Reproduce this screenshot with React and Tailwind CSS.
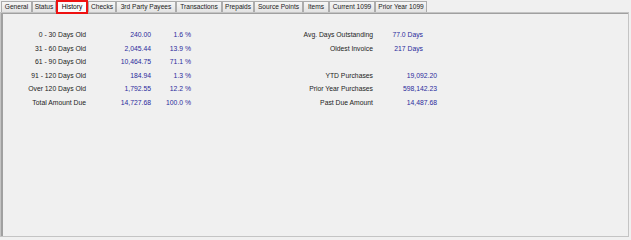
import React from "react";

const tabs = [
  ["General", 31],
  ["Status", 24],
  ["History", 32],
  ["Checks", 28],
  ["3rd Party Payees", 60],
  ["Transactions", 46],
  ["Prepaids", 32],
  ["Source Points", 49],
  ["Items", 26],
  ["Current 1099", 46],
  ["Prior Year 1099", 52],
];

const left = [
  ["0 - 30 Days Old", "240.00", "1.6 %"],
  ["31 - 60 Days Old", "2,045.44", "13.9 %"],
  ["61 - 90 Days Old", "10,464.75", "71.1 %"],
  ["91 - 120 Days Old", "184.94", "1.3 %"],
  ["Over 120 Days Old", "1,792.55", "12.2 %"],
  ["Total Amount Due", "14,727.68", "100.0 %"],
];

const right = [
  ["Avg. Days Outstanding", "77.0 Days", true],
  ["Oldest Invoice", "217 Days", true],
  ["", "", false],
  ["YTD Purchases", "19,092.20", false],
  ["Prior Year Purchases", "598,142.23", false],
  ["Past Due Amount", "14,487.68", false],
];

export default function App() {
  return (
    <div
      className="w-[631px] h-[240px] bg-[#f0f0f0] overflow-hidden relative"
      style={{ fontFamily: '"Liberation Sans", Arial, sans-serif' }}
    >
      <div className="flex h-[12px] pl-[1px] items-end relative z-10">
        {tabs.map(([t, w]) =>
          t === "History" ? (
            <div
              key={t}
              style={{ width: w }}
              className="h-[14px] -mb-[2px] self-start border-2 border-[#ee1111] bg-[#fbfbfb] flex items-center justify-center text-[6.6px] text-black leading-none"
            >
              {t}
            </div>
          ) : (
            <div
              key={t}
              style={{ width: w }}
              className="h-[11px] border border-b-0 border-[#acacac] bg-gradient-to-b from-[#f6f6f6] to-[#e3e3e3] flex items-center justify-center text-[6.6px] text-[#222] leading-none"
            >
              {t}
            </div>
          )
        )}
      </div>
      <div className="w-[629px] h-[225px] border border-[#c4c4c4] bg-[#f0f0f0]">
        <div className="h-full border-l-2 border-t border-[#a0a0a0] pt-[15px]">
          <div className="grid grid-cols-[83px_65px_40px_100px_82px_64px] auto-rows-[13.5px] items-center text-[6.8px] leading-none">
            {left.map((l, i) => (
              <React.Fragment key={i}>
                <div className="text-right text-[#1c1c1c]">{l[0]}</div>
                <div className="text-right text-[#2a2a9c]">{l[1]}</div>
                <div className="text-right text-[#2a2a9c]">{l[2]}</div>
                <div />
                <div className="text-right text-[#1c1c1c]">{right[i][0]}</div>
                <div
                  className={
                    "text-right text-[#2a2a9c] " + (right[i][2] ? "pr-[14px]" : "")
                  }
                >
                  {right[i][1]}
                </div>
              </React.Fragment>
            ))}
          </div>
        </div>
      </div>
    </div>
  );
}
